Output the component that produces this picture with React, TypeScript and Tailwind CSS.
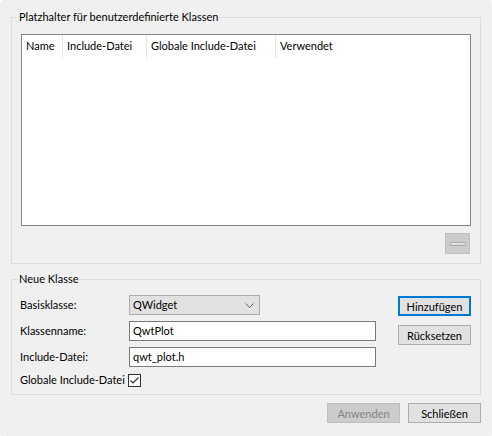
import React from "react";

const font = { fontFamily: 'Lato, "Segoe UI", sans-serif' };

function GroupBox({ title, className, children }: { title: string; className: string; children: React.ReactNode }) {
  return (
    <div className={"relative border border-[#dcdcdc] " + className}>
      <div className="absolute left-[6px] top-[-9px] bg-[#f0f0f0] px-[1px] text-[11px] leading-[16px] text-black whitespace-nowrap">{title}</div>
      {children}
    </div>
  );
}

function Button({ children, focus, disabled, className = "" }: { children: React.ReactNode; focus?: boolean; disabled?: boolean; className?: string }) {
  const base = "h-[20px] w-[73px] flex items-center justify-center text-[11px] leading-none whitespace-nowrap ";
  let style = "bg-[#e1e1e1] border border-[#adadad] text-black";
  if (focus) style = "bg-[#e1e1e1] border-2 border-[#0078d7] text-black";
  if (disabled) style = "bg-[#cccccc] border border-[#bfbfbf] text-[#838383]";
  return <div className={base + style + " " + className}>{children}</div>;
}

export default function App() {
  const cols = [
    { name: "Name", w: "w-[41px]" },
    { name: "Include-Datei", w: "w-[84px]" },
    { name: "Globale Include-Datei", w: "w-[129px]" },
  ];
  return (
    <div className="w-[492px] h-[436px] bg-white">
      <div className="w-[492px] h-[436px] bg-[#f0f0f0] rounded-[4px] px-[11px] pt-[17px] flex flex-col text-black" style={font}>
        <GroupBox title="Platzhalter für benutzerdefinierte Klassen" className="h-[247px] pt-[16px] px-[9px] flex flex-col">
          <div className="h-[192px] border border-[#828790] bg-white flex flex-col">
            <div className="h-[23px] flex items-stretch text-[11px]">
              {cols.map((c) => (
                <div key={c.name} className={c.w + " border-r border-[#e5e5e5] pl-[4px] flex items-center whitespace-nowrap"}>
                  {c.name}
                </div>
              ))}
              <div className="pl-[4px] flex items-center">Verwendet</div>
            </div>
          </div>
          <div className="flex justify-end mt-[7px] pr-[1px]">
            <div className="w-[25px] h-[21px] bg-[#cccccc] border border-[#bfbfbf] flex items-center justify-center">
              <div className="w-[16px] h-[4px] rounded-[1px] border border-[#a8a8a8] bg-gradient-to-b from-[#f4f4f4] to-[#d0d0d0]" />
            </div>
          </div>
        </GroupBox>

        <GroupBox title="Neue Klasse" className="mt-[15px] h-[116px] flex pl-[8px] pr-[9px] pt-[15px]">
          <div className="flex flex-col">
            <div className="flex items-center h-[20px]">
              <div className="w-[109px] text-[11px] whitespace-nowrap">Basisklasse:</div>
              <div className="w-[131px] h-[20px] bg-[#e1e1e1] border border-[#adadad] flex items-center justify-between pl-[3px] pr-[5px] text-[11px]">
                <span>QWidget</span>
                <svg width="9" height="5" viewBox="0 0 9 5" fill="none">
                  <path d="M0.5 0.5 L4.5 4.5 L8.5 0.5" stroke="#606060" strokeWidth="1" />
                </svg>
              </div>
            </div>
            <div className="flex items-center h-[20px] mt-[6px]">
              <div className="w-[109px] text-[11px] whitespace-nowrap">Klassenname:</div>
              <div className="w-[247px] h-[20px] bg-white border border-[#7a7a7a] flex items-center pl-[3px] text-[11px]">QwtPlot</div>
            </div>
            <div className="flex items-center h-[20px] mt-[6px]">
              <div className="w-[109px] text-[11px] whitespace-nowrap">Include-Datei:</div>
              <div className="w-[247px] h-[20px] bg-white border border-[#7a7a7a] flex items-center pl-[3px] text-[11px]">qwt_plot.h</div>
            </div>
            <div className="flex items-center h-[20px] mt-[3px]">
              <div className="w-[108px] text-[11px] whitespace-nowrap">Globale Include-Datei</div>
              <div className="w-[13px] h-[13px] bg-white border border-[#333333] flex items-center justify-center">
                <svg width="11" height="11" viewBox="0 0 11 11" fill="none">
                  <path d="M1.5 5.5 L4 8 L9.5 2.5" stroke="#333333" strokeWidth="1.2" />
                </svg>
              </div>
            </div>
          </div>
          <div className="ml-auto flex flex-col pt-[1px]">
            <Button focus>Hinzufügen</Button>
            <Button className="mt-[9px]">Rücksetzen</Button>
          </div>
        </GroupBox>

        <div className="flex justify-end mt-[8px] gap-[8px]">
          <Button disabled>Anwenden</Button>
          <Button>Schließen</Button>
        </div>
      </div>
    </div>
  );
}
